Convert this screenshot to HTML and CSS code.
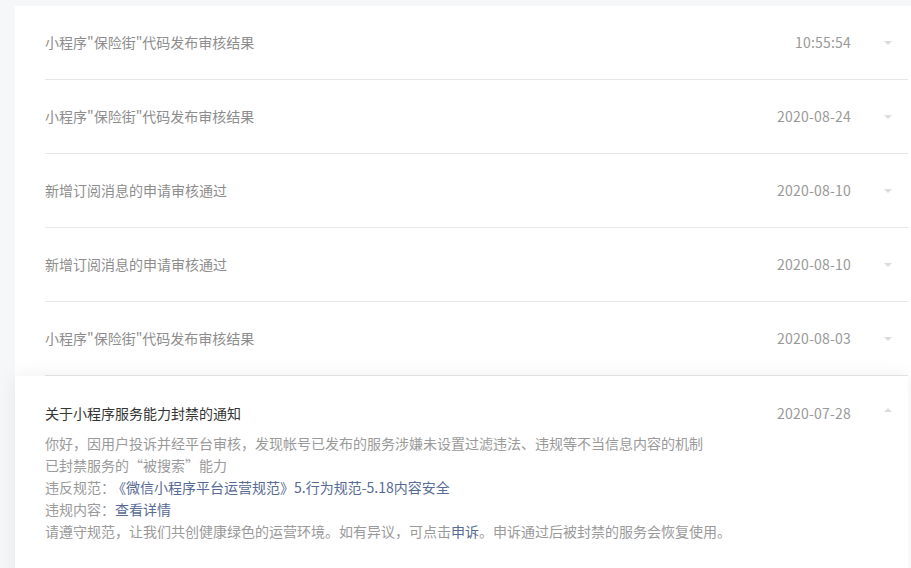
FILE: index.html
```html
<!DOCTYPE html>
<html lang="zh-CN">
<head>
<meta charset="utf-8">
<title>消息</title>
<link rel="stylesheet" href="styles.css">
</head>
<body>
<div class="card">
  <ul class="list">
    <li class="row">
      <div class="head"><span class="title">小程序"保险街"代码发布审核结果</span><span class="date">10:55:54</span><span class="arrow-box"><i class="caret down"></i></span></div>
    </li>
    <li class="row">
      <div class="head"><span class="title">小程序"保险街"代码发布审核结果</span><span class="date">2020-08-24</span><span class="arrow-box"><i class="caret down"></i></span></div>
    </li>
    <li class="row">
      <div class="head"><span class="title">新增订阅消息的申请审核通过</span><span class="date">2020-08-10</span><span class="arrow-box"><i class="caret down"></i></span></div>
    </li>
    <li class="row">
      <div class="head"><span class="title">新增订阅消息的申请审核通过</span><span class="date">2020-08-10</span><span class="arrow-box"><i class="caret down"></i></span></div>
    </li>
    <li class="row">
      <div class="head"><span class="title">小程序"保险街"代码发布审核结果</span><span class="date">2020-08-03</span><span class="arrow-box"><i class="caret down"></i></span></div>
    </li>
    <li class="row open">
      <div class="head"><span class="title">关于小程序服务能力封禁的通知</span><span class="date">2020-07-28</span><span class="arrow-box"><i class="caret up"></i></span></div>
      <div class="body">
        <p>你好，因用户投诉并经平台审核，发现帐号已发布的服务涉嫌未设置过滤违法、违规等不当信息内容的机制</p>
        <p>已封禁服务的“被搜索”能力</p>
        <p class="rule">违反规范：<a class="link">《微信小程序平台运营规范》5.行为规范-5.18内容安全</a></p>
        <p>违规内容：<a class="link">查看详情</a></p>
        <p>请遵守规范，让我们共创健康绿色的运营环境。如有异议，可点击<a class="link">申诉</a>。申诉通过后被封禁的服务会恢复使用。</p>
      </div>
    </li>
  </ul>
</div>
</body>
</html>
```

FILE: styles.css
```css
html, body {
  margin: 0;
  padding: 0;
}
body {
  background: #f6f7f9;
  font-family: "Noto Sans CJK SC", "Noto Sans", sans-serif;
  font-size: 14px;
  height: 568px;
  overflow: hidden;
}
.card {
  margin: 6px 0 0 15px;
  background: #fff;
  min-height: 600px;
}
.list {
  list-style: none;
  margin: 0;
  padding: 0;
}
.row {
  margin: 0 3px 0 30px;
  border-bottom: 1px solid #e7e7eb;
}
.head {
  display: flex;
  align-items: center;
  height: 73px;
  box-sizing: border-box;
  padding-bottom: 2px;
}
.title {
  flex: 1;
  color: #8d8d8d;
  line-height: 22px;
}
.date {
  color: #999;
  line-height: 22px;
  letter-spacing: 0.2px;
}
.arrow-box {
  width: 57px;
  display: flex;
  justify-content: flex-end;
  padding-right: 16px;
  padding-top: 2px;
  box-sizing: border-box;
}
.caret {
  display: block;
  width: 0;
  height: 0;
  border-left: 4px solid transparent;
  border-right: 4px solid transparent;
}
.caret.down {
  border-top: 4px solid #dcdcdc;
}
.caret.up {
  border-bottom: 4px solid #dcdcdc;
}
.row.open {
  margin: 0 3px 0 0;
  padding-left: 30px;
  border-bottom: none;
  box-shadow: 0 0 18px rgba(0, 0, 0, 0.07);
  padding-bottom: 40px;
}
.row.open .head {
  height: auto;
  padding-top: 26px;
  padding-bottom: 0;
  align-items: flex-start;
}
.row.open .arrow-box {
  padding-top: 6px;
}
.row.open .title {
  color: #353535;
}
.body {
  margin-top: 8px;
  color: #9a9a9a;
  line-height: 22px;
}
.body p {
  margin: 0;
}
.link {
  color: #576b95;
  text-decoration: none;
}
.rule .link {
  margin-left: 4px;
}
```
